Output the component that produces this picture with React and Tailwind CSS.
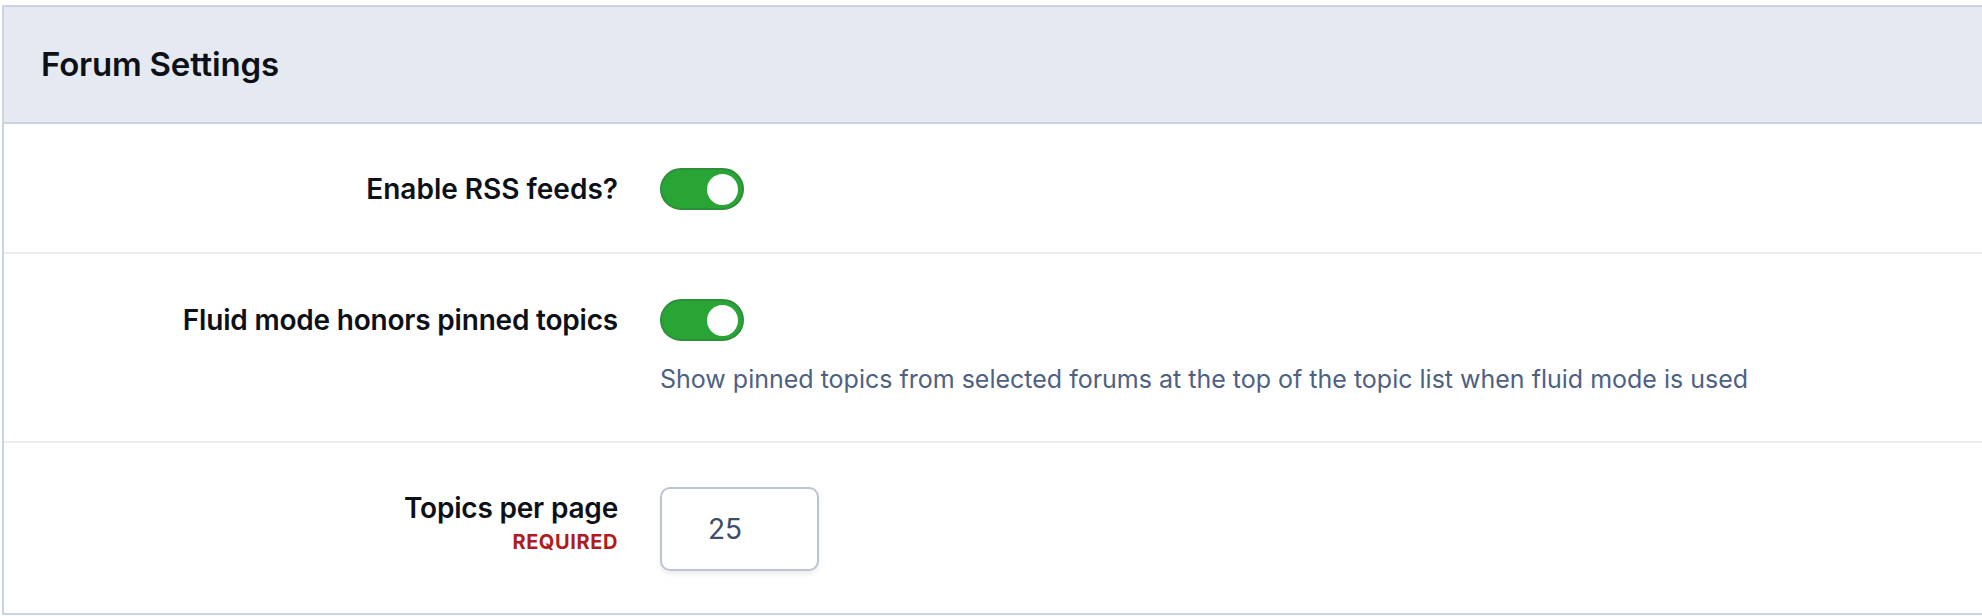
export default function App() {
    return (
        <div className="min-h-screen bg-white pt-[5px] pl-[2px] font-['Inter','Liberation_Sans',sans-serif]">
            <div className="border-l-2 border-t-2 border-b-2 border-[#cbd3e0]">
                <div className="h-[117px] bg-[#e5e9f2] border-b-2 border-[#cbd3e0] flex items-center pl-[37px]">
                    <h2 className="text-[33px] font-semibold text-[#0d1117] tracking-[-0.2px]">Forum Settings</h2>
                </div>

                <div className="flex pt-[44px] pb-[42px] border-b-2 border-[#ececec]">
                    <div className="w-[614px] shrink-0 text-right">
                        <div className="h-[42px] leading-[42px] text-[28px] font-semibold text-[#0d1117]">Enable RSS feeds?</div>
                    </div>
                    <div className="ml-[42px]">
                        <Toggle />
                    </div>
                </div>

                <div className="flex pt-[45px] pb-[44px] border-b-2 border-[#ececec]">
                    <div className="w-[614px] shrink-0 text-right">
                        <div className="h-[42px] leading-[42px] text-[28px] font-semibold text-[#0d1117] tracking-[-0.2px]">Fluid mode honors pinned topics</div>
                    </div>
                    <div className="ml-[42px]">
                        <Toggle />
                        <p className="mt-[20px] text-[25px] leading-[36px] text-[#4d6183]">
                            Show pinned topics from selected forums at the top of the topic list when fluid mode is used
                        </p>
                    </div>
                </div>

                <div className="flex pt-[44px] pb-[42px]">
                    <div className="w-[614px] shrink-0 text-right">
                        <div className="h-[42px] leading-[42px] text-[28px] font-semibold text-[#0d1117] tracking-[-0.2px]">Topics per page</div>
                        <div className="text-[20px] leading-[26px] font-bold tracking-[0.6px] text-[#b01c1c]">REQUIRED</div>
                    </div>
                    <div className="ml-[42px]">
                        <input
                            type="text"
                            defaultValue="25"
                            className="w-[159px] h-[84px] border-2 border-[#bcc4d3] rounded-[10px] pl-[46px] text-[28px] text-[#3d4c68] shadow-[0_3px_5px_rgba(0,0,0,0.08)] outline-none"
                        />
                    </div>
                </div>
            </div>
        </div>
    );
}

function Toggle() {
    return (
        <div className="w-[84px] h-[42px] rounded-full bg-[#28a535] border-2 border-[#2f8e3a] flex items-center justify-end pr-[4px]">
            <span className="w-[31px] h-[31px] rounded-full bg-white" />
        </div>
    );
}
